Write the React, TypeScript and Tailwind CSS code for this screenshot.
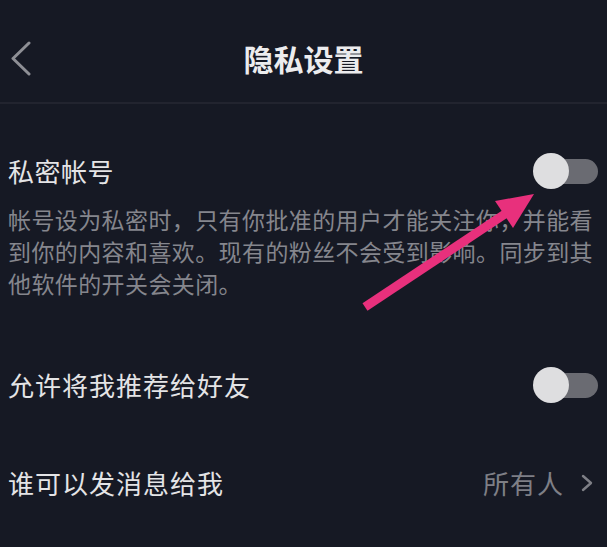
function Toggle() {
  return (
    <div className="relative w-[65px] h-[36px] flex items-center">
      <div className="ml-[12px] w-[53px] h-[25px] rounded-full bg-[#6a6b72]" />
      <div className="absolute left-0 top-0 w-[36px] h-[36px] rounded-full bg-[#dedee0]" />
    </div>
  );
}

export default function App() {
  return (
    <div
      className="relative w-[607px] h-[547px] overflow-hidden bg-[#161924] text-[#e4e4e6]"
      style={{ fontFamily: '"Noto Sans CJK SC", "Noto Sans", sans-serif' }}
    >
      {/* header */}
      <div className="relative flex items-center justify-center h-[102px] pt-[14px]">
        <svg className="absolute left-[10px] top-[41px]" width="22" height="35" viewBox="0 0 22 35">
          <polyline
            points="19,2 3,17.5 19,33"
            fill="none"
            stroke="#8e8f95"
            strokeWidth="3"
            strokeLinecap="round"
            strokeLinejoin="round"
          />
        </svg>
        <h1 className="text-[30px] font-bold text-[#ececee]">隐私设置</h1>
      </div>
      <div className="h-[2px] bg-[#22242f]" />

      {/* 私密帐号 */}
      <div className="px-[8px]">
        <div className="flex items-center justify-between mt-[49px] pr-[1px]">
          <span className="text-[26px] leading-[36px] tracking-[0.5px]">私密帐号</span>
          <Toggle />
        </div>
        <p className="mt-[14px] w-[591px] text-[23px] leading-[32px] tracking-[0.4px] text-[#85868d]">
          帐号设为私密时，只有你批准的用户才能关注你，并能看到你的内容和喜欢。现有的粉丝不会受到影响。同步到其他软件的开关会关闭。
        </p>

        {/* 允许将我推荐给好友 */}
        <div className="flex items-center justify-between mt-[68px] pr-[1px]">
          <span className="text-[26px] leading-[36px] tracking-[1px]">允许将我推荐给好友</span>
          <Toggle />
        </div>

        {/* 谁可以发消息给我 */}
        <div className="flex items-center justify-between mt-[62px]">
          <span className="text-[26px] leading-[36px] tracking-[1px]">谁可以发消息给我</span>
          <div className="flex items-center text-[#7e7f86]">
            <span className="text-[26px] leading-[36px] tracking-[1px]">所有人</span>
            <svg className="ml-[17px] mr-[6px]" width="12" height="18" viewBox="0 0 12 18">
              <polyline
                points="2,2 10,9 2,16"
                fill="none"
                stroke="#7e7f86"
                strokeWidth="2.4"
                strokeLinecap="round"
                strokeLinejoin="round"
              />
            </svg>
          </div>
        </div>
      </div>

      {/* annotation arrow */}
      <svg className="absolute left-0 top-0 pointer-events-none" width="607" height="547">
        <line x1="365" y1="307" x2="508" y2="212" stroke="#e8307c" strokeWidth="9" />
        <polygon points="534,194 513,228 495,201" fill="#e8307c" />
      </svg>
    </div>
  );
}
